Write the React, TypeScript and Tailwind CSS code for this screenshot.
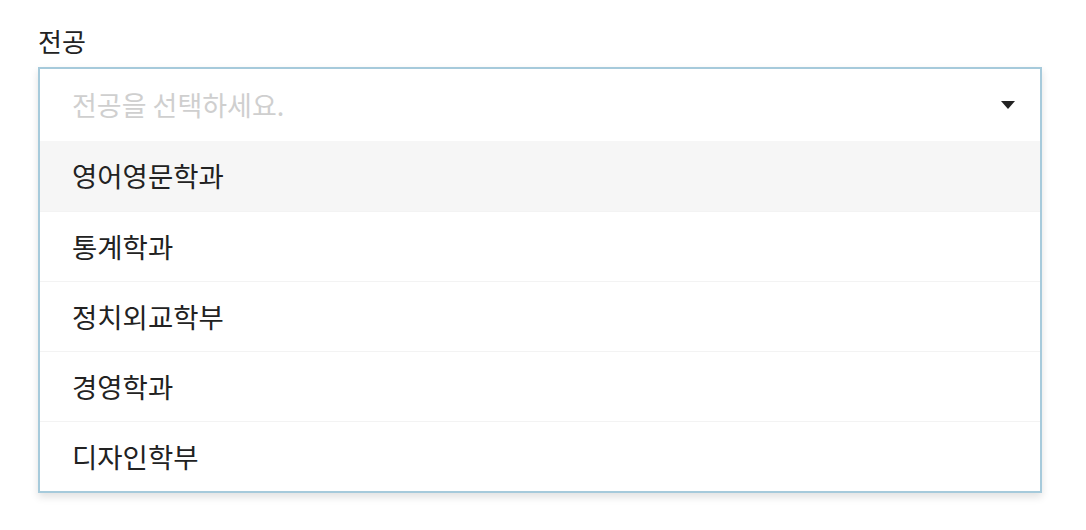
import React from 'react';

const majors = ['영어영문학과', '통계학과', '정치외교학부', '경영학과', '디자인학부'];

const font = { fontFamily: '"Noto Sans CJK KR", "Noto Sans", sans-serif' };

export default function App() {
    return (
        <div className="min-h-screen bg-white px-[38px] pt-[23px]" style={font}>
            <p className="text-[26px] leading-[36px] text-[#222]">전공</p>
            <div className="mt-[8px] w-[1004px] border-2 border-[#a6cadb] bg-white shadow-[0_4px_8px_rgba(0,0,0,0.12)]">
                <div className="flex h-[72px] items-center justify-between pl-[32px] pr-[24px]">
                    <span className="text-[27px] text-[#cfcfcf]">전공을 선택하세요.</span>
                    <svg width="16" height="10" viewBox="0 0 16 10">
                        <path d="M1 1h14l-7 8z" fill="#222" />
                    </svg>
                </div>
                {majors.map((m, i) => (
                    <div
                        key={m}
                        className={`flex h-[70px] items-center pl-[32px] text-[27.5px] text-[#222] ${i === 0 ? 'bg-[#f6f6f6]' : 'border-t border-[#f3f3f3]'}`}
                    >
                        {m}
                    </div>
                ))}
            </div>
        </div>
    );
}
